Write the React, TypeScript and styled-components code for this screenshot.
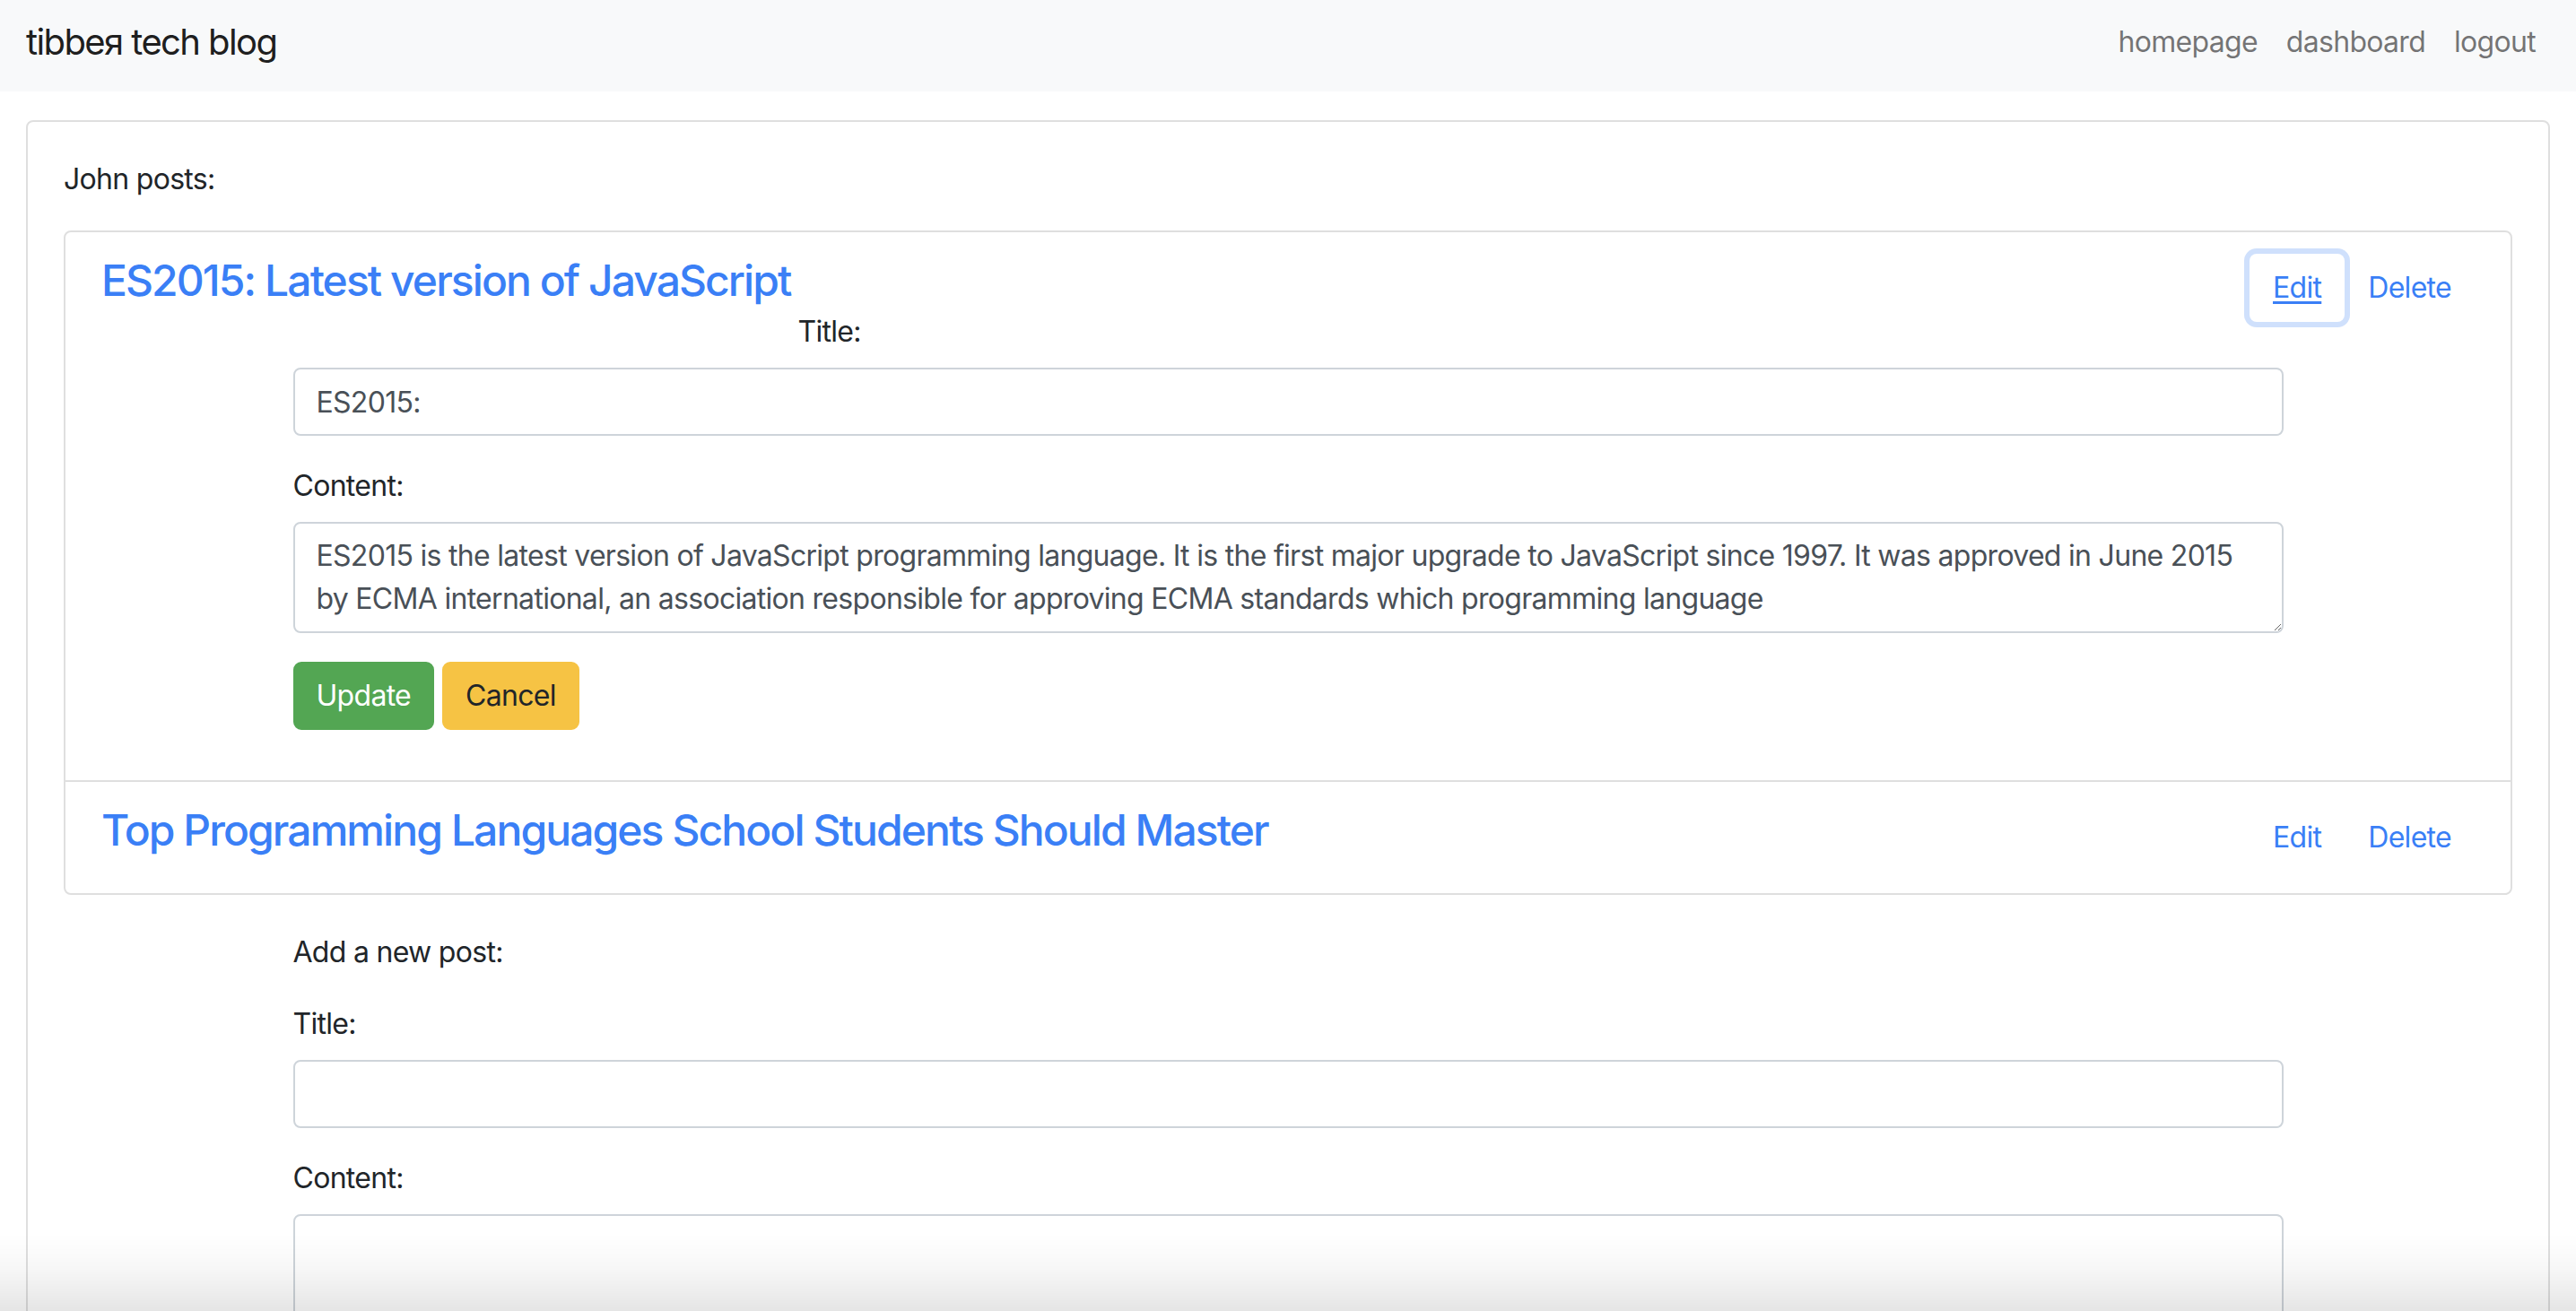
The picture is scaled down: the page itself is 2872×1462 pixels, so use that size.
import React from "react";
import styled, { createGlobalStyle, css } from "styled-components";

const BLUE = "#3a7ff6";

const GlobalStyle = createGlobalStyle`
  html, body {
    margin: 0;
    padding: 0;
    overflow: hidden;
    background: #ffffff;
  }
  body {
    font-family: Inter, "Noto Sans", "Liberation Sans", sans-serif;
    font-size: 32px;
    line-height: 48px;
    color: #212529;
    letter-spacing: -0.022em;
  }
  *, *::before, *::after { box-sizing: border-box; }
`;

const Page = styled.div`
  min-height: 100vh;
`;

const Navbar = styled.nav`
  display: flex;
  align-items: center;
  justify-content: space-between;
  height: 102px;
  padding: 0 29px 8px;
  background: #f8f9fa;
`;

const Brand = styled.a`
  font-size: 40px;
  line-height: 60px;
  letter-spacing: -0.04em;
  color: rgba(0, 0, 0, 0.9);
  text-decoration: none;
`;

const NavList = styled.div`
  display: flex;
`;

const NavLink = styled.a`
  padding: 0 16px;
  font-size: 32px;
  line-height: 48px;
  color: rgba(0, 0, 0, 0.55);
  text-decoration: none;
`;

const Main = styled.main`
  padding: 32px 29px 0;
`;

const Card = styled.section`
  border: 2px solid #dfdfdf;
  border-radius: 8px;
  padding: 40px;
`;

const Owner = styled.p`
  margin: 0 0 33px;
`;

const PostList = styled.div`
  border: 2px solid #dfdfdf;
  border-radius: 8px;
  margin-bottom: 40px;
`;

const PostItem = styled.article`
  padding: 24px 40px;
  & + & {
    border-top: 2px solid #dfdfdf;
  }
`;

const PostHeader = styled.div`
  display: flex;
  justify-content: space-between;
  align-items: flex-start;
`;

const PostTitle = styled.h4`
  margin: 0;
  padding-top: 1px;
  font-size: 48px;
  font-weight: 550;
  line-height: 57.6px;
  letter-spacing: -0.04em;
  a {
    color: ${BLUE};
    text-decoration: none;
  }
`;

const Actions = styled.div`
  display: flex;
`;

const LinkButton = styled.button<{ $focused?: boolean }>`
  font-family: inherit;
  font-size: 32px;
  line-height: 48px;
  letter-spacing: inherit;
  padding: 12px 24px;
  border: 2px solid transparent;
  border-radius: 8px;
  background: transparent;
  color: ${BLUE};
  cursor: pointer;
  ${(p) =>
    p.$focused &&
    css`
      text-decoration: underline;
      text-underline-offset: 4px;
      box-shadow: 0 0 0 6px #cfe0fc;
    `}
`;

const Form = styled.form<{ $pullUp?: boolean }>`
  width: 2219px;
  margin: ${(p) => (p.$pullUp ? "-13px" : "0")} auto 0;
`;

const FieldGroup = styled.div`
  margin-bottom: 32px;
`;

const Label = styled.label<{ $indent?: number }>`
  display: block;
  margin-bottom: 16px;
  padding-left: ${(p) => p.$indent ?? 0}px;
`;

const fieldBase = css`
  display: block;
  width: 100%;
  padding: 12px 24px;
  font-family: inherit;
  font-size: 32px;
  line-height: 48px;
  letter-spacing: inherit;
  color: #495057;
  background: #ffffff;
  border: 2px solid #ced4da;
  border-radius: 8px;
  outline: none;
`;

const TextInput = styled.input`
  ${fieldBase};
  height: 76px;
`;

const TextArea = styled.textarea`
  ${fieldBase};
  resize: vertical;
`;

const ButtonRow = styled.div`
  display: flex;
  gap: 9px;
  margin-bottom: 32px;
`;

const SolidButton = styled.button<{ $variant: "success" | "warning" }>`
  font-family: inherit;
  font-size: 32px;
  line-height: 48px;
  letter-spacing: inherit;
  padding: 12px 24px;
  border: 2px solid transparent;
  border-radius: 9px;
  cursor: pointer;
  ${(p) =>
    p.$variant === "success"
      ? css`
          background: #53a653;
          border-color: #53a653;
          color: #ffffff;
        `
      : css`
          background: #f6c344;
          border-color: #f6c344;
          color: #212529;
        `}
`;

const SectionHeading = styled.p`
  margin: 0 0 32px;
`;

const BottomShade = styled.div`
  position: fixed;
  left: 0;
  right: 0;
  bottom: 0;
  height: 86px;
  pointer-events: none;
  background: linear-gradient(
    to bottom,
    rgba(0, 0, 0, 0) 0%,
    rgba(0, 0, 0, 0.03) 45%,
    rgba(0, 0, 0, 0.1) 100%
  );
`;

const CONTENT =
  "ES2015 is the latest version of JavaScript programming language. It is the first major upgrade to JavaScript since 1997. It was approved in June 2015 by ECMA international, an association responsible for approving ECMA standards which programming language";

export default function App() {
  return (
    <Page>
      <GlobalStyle />
      <Navbar>
        <Brand href="#">tibbeя tech blog</Brand>
        <NavList>
          <NavLink href="#">homepage</NavLink>
          <NavLink href="#">dashboard</NavLink>
          <NavLink href="#">logout</NavLink>
        </NavList>
      </Navbar>
      <Main>
        <Card>
          <Owner>John posts:</Owner>
          <PostList>
            <PostItem>
              <PostHeader>
                <PostTitle>
                  <a href="#">ES2015: Latest version of JavaScript</a>
                </PostTitle>
                <Actions>
                  <LinkButton $focused>Edit</LinkButton>
                  <LinkButton>Delete</LinkButton>
                </Actions>
              </PostHeader>
              <Form $pullUp onSubmit={(e) => e.preventDefault()}>
                <FieldGroup>
                  <Label $indent={563}>Title:</Label>
                  <TextInput defaultValue="ES2015:" />
                </FieldGroup>
                <FieldGroup>
                  <Label>Content:</Label>
                  <TextArea rows={2} defaultValue={CONTENT} />
                </FieldGroup>
                <ButtonRow>
                  <SolidButton $variant="success" type="button">
                    Update
                  </SolidButton>
                  <SolidButton $variant="warning" type="button">
                    Cancel
                  </SolidButton>
                </ButtonRow>
              </Form>
            </PostItem>
            <PostItem>
              <PostHeader>
                <PostTitle>
                  <a href="#">Top Programming Languages School Students Should Master</a>
                </PostTitle>
                <Actions>
                  <LinkButton>Edit</LinkButton>
                  <LinkButton>Delete</LinkButton>
                </Actions>
              </PostHeader>
            </PostItem>
          </PostList>
          <Form onSubmit={(e) => e.preventDefault()}>
            <SectionHeading>Add a new post:</SectionHeading>
            <FieldGroup>
              <Label>Title:</Label>
              <TextInput />
            </FieldGroup>
            <FieldGroup>
              <Label>Content:</Label>
              <TextArea rows={3} />
            </FieldGroup>
          </Form>
        </Card>
      </Main>
      <BottomShade />
    </Page>
  );
}
